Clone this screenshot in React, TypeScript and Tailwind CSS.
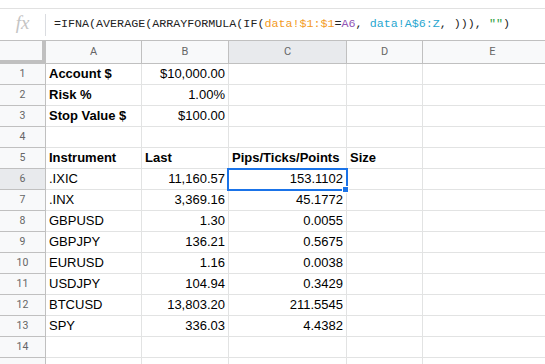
const cols = [
  { key: 'A', w: 'w-[96px]' },
  { key: 'B', w: 'w-[87px]' },
  { key: 'C', w: 'w-[118px]' },
  { key: 'D', w: 'w-[76px]' },
  { key: 'E', w: 'w-[140px]' },
]

type Cell = { text?: string; bold?: boolean; right?: boolean }

const rows: Cell[][] = [
  [{ text: 'Account $', bold: true }, { text: '$10,000.00', right: true }],
  [{ text: 'Risk %', bold: true }, { text: '1.00%', right: true }],
  [{ text: 'Stop Value $', bold: true }, { text: '$100.00', right: true }],
  [],
  [
    { text: 'Instrument', bold: true },
    { text: 'Last', bold: true },
    { text: 'Pips/Ticks/Points', bold: true },
    { text: 'Size', bold: true },
  ],
  [{ text: '.IXIC' }, { text: '11,160.57', right: true }, { text: '153.1102', right: true }],
  [{ text: '.INX' }, { text: '3,369.16', right: true }, { text: '45.1772', right: true }],
  [{ text: 'GBPUSD' }, { text: '1.30', right: true }, { text: '0.0055', right: true }],
  [{ text: 'GBPJPY' }, { text: '136.21', right: true }, { text: '0.5675', right: true }],
  [{ text: 'EURUSD' }, { text: '1.16', right: true }, { text: '0.0038', right: true }],
  [{ text: 'USDJPY' }, { text: '104.94', right: true }, { text: '0.3429', right: true }],
  [{ text: 'BTCUSD' }, { text: '13,803.20', right: true }, { text: '211.5545', right: true }],
  [{ text: 'SPY' }, { text: '336.03', right: true }, { text: '4.4382', right: true }],
  [],
  [],
]

function FormulaBar() {
  return (
    <div className="mt-[8px] flex h-[32px] items-center border-t border-[#e1e1e1]">
      <div className="flex w-[45px] shrink-0 items-center justify-center self-stretch">
        <span className="-mt-[4px] font-['Liberation_Serif',serif] text-[19px] italic leading-none text-[#c4c4c4]">
          fx
        </span>
      </div>
      <div className="h-[22px] w-px shrink-0 bg-[#dadce0]" />
      <div className="whitespace-pre pl-[8px] font-['Liberation_Mono',monospace] text-[11.7px] text-[#222]">
        =IFNA(AVERAGE(ARRAYFORMULA(IF(
        <span className="text-[#f39a1c]">data!$1:$1</span>=
        <span className="text-[#9155b5]">A6</span>,{' '}
        <span className="text-[#26a6cf]">data!A$6:Z</span>, ))),{' '}
        <span className="text-[#2a9d3c]">""</span>)
      </div>
    </div>
  )
}

export default function App() {
  return (
    <div className="h-[364px] w-[545px] overflow-hidden bg-white font-['Liberation_Sans',Arial,sans-serif]">
      <FormulaBar />
      <div className="relative">
        <div className="flex h-[24px] border-t border-[#c0c0c0]">
          <div className="w-[46px] shrink-0 border-r-4 border-b-4 border-[#c0c0c0] bg-[#f8f9fa]" />
          {cols.map((c) => (
            <div
              key={c.key}
              className={`${c.w} flex shrink-0 items-center justify-center border-r border-b border-[#c0c0c0] pt-px font-['Roboto',sans-serif] text-[11px] text-[#666] ${
                c.key === 'C' ? 'bg-[#e8eaed]' : 'bg-[#f8f9fa]'
              }`}
            >
              {c.key}
            </div>
          ))}
        </div>
        {rows.map((row, i) => (
          <div key={i} className="flex h-[21px]">
            <div
              className={`flex w-[46px] shrink-0 items-center justify-center border-r border-b border-[#c0c0c0] font-['Roboto',sans-serif] text-[10.5px] text-[#666] ${
                i === 5 ? 'bg-[#e8eaed]' : 'bg-[#f8f9fa]'
              }`}
            >
              {i < 14 ? i + 1 : null}
            </div>
            {cols.map((c, j) => {
              const cell = row[j]
              return (
                <div
                  key={c.key}
                  className={`${c.w} flex shrink-0 items-center overflow-visible whitespace-nowrap border-r border-b border-[#e2e3e3] px-[3px] text-[13px] text-black ${
                    cell?.right ? 'justify-end' : 'justify-start'
                  } ${cell?.bold ? 'font-bold' : ''}`}
                >
                  {cell?.text}
                </div>
              )
            })}
          </div>
        ))}
        <div className="pointer-events-none absolute left-[227px] top-[128px] h-[23px] w-[121px] border-2 border-[#1a73e8]" />
        <div className="pointer-events-none absolute left-[342px] top-[146px] h-[7px] w-[7px] border border-white bg-[#1a73e8]" />
      </div>
    </div>
  )
}
